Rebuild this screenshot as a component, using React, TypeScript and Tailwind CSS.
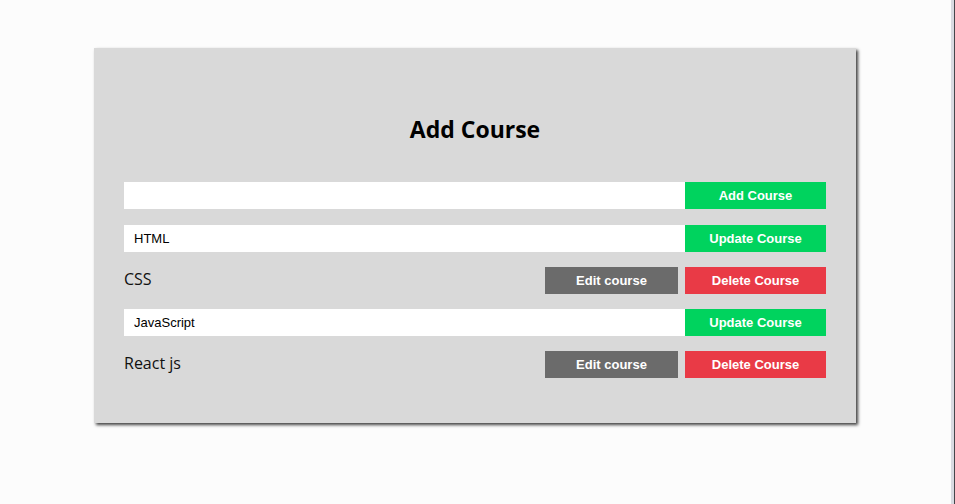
import { useState } from "react";

type Course = { id: number; name: string; editing: boolean };

const initial: Course[] = [
  { id: 1, name: "HTML", editing: true },
  { id: 2, name: "CSS", editing: false },
  { id: 3, name: "JavaScript", editing: true },
  { id: 4, name: "React js", editing: false },
];

const btn =
  "h-[27px] text-[13px] font-bold text-white font-['Liberation_Sans',Arial,sans-serif]";

const App = () => {
  const [courses, setCourses] = useState<Course[]>(initial);
  const [value, setValue] = useState("");

  const update = (id: number, name: string) =>
    setCourses(courses.map((c) => (c.id === id ? { ...c, name } : c)));

  return (
    <div className="flex min-h-[504px] bg-[#fcfcfc]">
      <div className="flex-1">
        <div className="mt-12 ml-[94px] w-[762px] bg-[#d9d9d9] px-[30px] pt-[66px] pb-[30px] shadow-[2px_2px_3px_rgba(0,0,0,0.75)]">
          <h2 className="mb-[38px] text-center text-[23px] leading-[30px] font-bold text-black font-['Open_Sans',sans-serif]">
            Add Course
          </h2>

          <div className="mb-[16px] flex">
            <input
              value={value}
              onChange={(e) => setValue(e.target.value)}
              className="h-[27px] flex-1 bg-white px-[10px] text-[13px] outline-none font-['Liberation_Sans',Arial,sans-serif]"
            />
            <button className={`${btn} w-[141px] bg-[#00d35e]`}>Add Course</button>
          </div>

          {courses.map((c) =>
            c.editing ? (
              <div key={c.id} className="mb-[15px] flex">
                <input
                  value={c.name}
                  onChange={(e) => update(c.id, e.target.value)}
                  className="h-[27px] flex-1 bg-white px-[10px] text-[13px] text-black outline-none font-['Liberation_Sans',Arial,sans-serif]"
                />
                <button className={`${btn} w-[141px] bg-[#00d35e]`}>Update Course</button>
              </div>
            ) : (
              <div key={c.id} className="mb-[15px] flex items-center">
                <span className="flex-1 -mt-[3px] text-[16px] text-[#111] font-['Open_Sans',sans-serif]">
                  {c.name}
                </span>
                <button className={`${btn} mr-[7px] w-[133px] bg-[#6b6b6b]`}>Edit course</button>
                <button className={`${btn} w-[141px] bg-[#e93a46]`}>Delete Course</button>
              </div>
            )
          )}
        </div>
      </div>
      <div className="w-[3px] bg-[#d8dae1]" />
      <div className="w-px bg-[#45464b]" />
    </div>
  );
};

export default App;
